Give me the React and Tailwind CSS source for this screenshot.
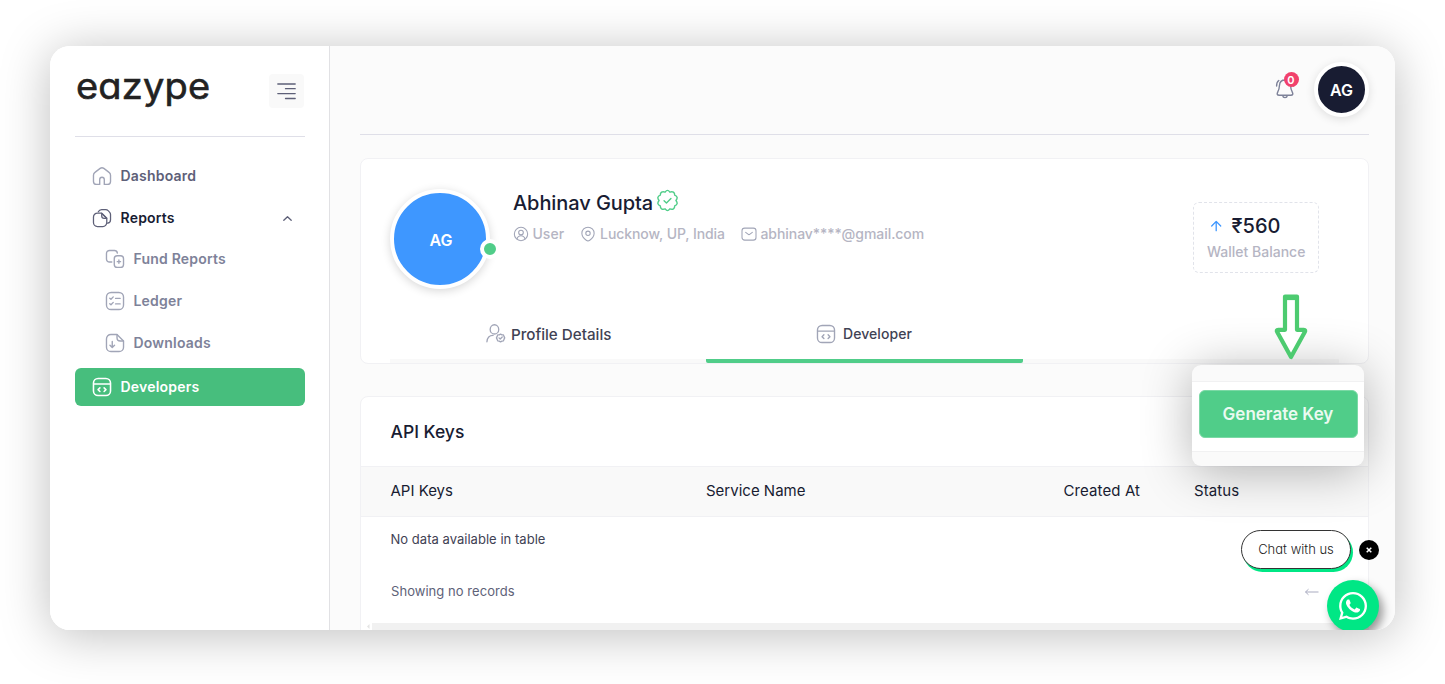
import React from "react";
import { FaWhatsapp } from "react-icons/fa";

function Svg({ size = 24, className = "", width = 1.5, children }) {
  return (
    <svg width={size} height={size} viewBox="0 0 24 24" fill="none" stroke="currentColor" strokeWidth={width} strokeLinecap="round" strokeLinejoin="round" className={`shrink-0 ${className}`}>
      {children}
    </svg>
  );
}

const HomeIcon = () => (
  <Svg size={22}>
    <path d="M9.500 21.200H6a3.300 3.300 0 0 1-3.300-3.300v-6.800c0-1.300.6-2.400 1.600-3.100L10 3.700a3.300 3.300 0 0 1 4 0L19.700 8c1 .7 1.600 1.800 1.600 3.100v6.800a3.300 3.300 0 0 1-3.300 3.300h-3.500v-5.300a2.500 2.500 0 0 0-5 0z" />
  </Svg>
);
const ReportsIcon = () => (
  <Svg size={22} width={1.400}>
    <path d="M8 5.200C8.800 3.500 10 2.800 11.600 2.800H16c1.200 0 2 .4 2.700 1.200l1.500 1.600c.8.8 1.100 1.600 1.100 2.700V14c0 2.200-1.200 3.500-3.200 3.700" />
    <path d="M7 6.700h4.500l5.700 5.600V17a4.300 4.300 0 0 1-4.300 4.300H7A4.300 4.300 0 0 1 2.700 17v-6A4.300 4.300 0 0 1 7 6.700z" />
    <path d="M11.700 6.900v2.800c0 1.700 1 2.600 2.600 2.600h2.800z" />
  </Svg>
);
const FundIcon = () => (
  <Svg size={22}>
    <path d="M8.500 15.300H6a3.300 3.300 0 0 1-3.300-3.300V6A3.300 3.300 0 0 1 6 2.700h5.400a3.300 3.300 0 0 1 3.200 2.800" />
    <rect x="11.200" y="8.500" width="10.100" height="12.700" rx="3.300" />
    <path d="M16.250 13.100v3.600M14.450 14.900h3.600" />
  </Svg>
);
const LedgerIcon = () => (
  <Svg size={22}>
    <rect x="2.700" y="2.700" width="18.600" height="18.600" rx="5" />
    <path d="M6.300 8.900l1.300 1.200 2.500-2.600M6.300 14.900l1.300 1.200 2.500-2.600M12.600 9.200h5M12.600 15.200h5" />
  </Svg>
);
const DownloadIcon = () => (
  <Svg size={22}>
    <path d="M14.200 2.700H7.500a4.800 4.800 0 0 0-4.800 4.800v9a4.800 4.800 0 0 0 4.800 4.800h9a4.800 4.800 0 0 0 4.800-4.800v-6.700z" />
    <path d="M14.200 2.900v3.400c0 2.400 1.100 3.500 3.500 3.500h3.500M9 10.300v6.500M6.500 14.500L9 17l2.500-2.500" />
  </Svg>
);
const CodeIcon = ({ width }) => (
  <Svg size={22} width={width}>
    <rect x="2.700" y="2.700" width="18.600" height="18.600" rx="5" />
    <path d="M2.900 8.800h18.200M9.700 12.900l-2 2 2 2M14.300 12.900l2 2-2 2" />
  </Svg>
);
const ProfileIcon = () => (
  <Svg size={21}>
    <ellipse cx="10.800" cy="7.300" rx="4.900" ry="5.300" />
    <path d="M2.200 21.500c.4-4.600 3-7.300 7-7.300" />
    <path d="M16.200 13.500l1.600-.8 1.600.8 1.700.1.600 1.700.8 1.700-.8 1.700-.6 1.700-1.700.3-1.600.8-1.600-.8-1.700-.3-.6-1.700-.8-1.700.8-1.700.6-1.700z" />
    <path d="M16 17l1.400 1.300 2.300-2.300" />
  </Svg>
);
const UserIcon = () => (
  <Svg size={16} width={1.600}>
    <circle cx="12" cy="12" r="10" />
    <circle cx="12" cy="9.800" r="3.500" />
    <path d="M6 19.500c.8-3 3-4.800 6-4.800s5.200 1.800 6 4.800" />
  </Svg>
);
const PinIcon = () => (
  <Svg size={16} width={1.600}>
    <path d="M12 1.800a9.200 9.200 0 0 1 9.200 9.200c0 4-3.200 8-6.600 10.400a4.500 4.500 0 0 1-5.200 0C6 19 2.800 15 2.800 11A9.200 9.200 0 0 1 12 1.800z" />
    <circle cx="12" cy="11" r="3.300" />
  </Svg>
);
const MailIcon = () => (
  <Svg size={16} width={1.600}>
    <rect x="1.500" y="3.200" width="21" height="18" rx="4" />
    <path d="M7 9.500l3.500 2.800c.9.700 2.100.7 3 0L17 9.500" />
  </Svg>
);
const BellIcon = () => (
  <Svg size={24} width={1.400}>
    <path d="M12 4c-3.300 0-5.300 2.300-5.500 5.300-.2 3.400-.6 4.700-1.700 6.500-1.200 2.200-.6 3.500 1.400 3.500h11.600c2 0 2.600-1.300 1.400-3.500-1.100-1.800-1.500-3.100-1.700-6.500C17.300 6.300 15.300 4 12 4z" />
    <path d="M9.700 19.600c.2 1.300 1.100 2 2.300 2s2.100-.7 2.300-2M5.800 4.500C4.300 5.600 3.500 7.500 3.600 10M18.200 4.500c1.500 1.100 2.300 3 2.200 5.500" />
  </Svg>
);
const VerifiedIcon = () => (
  <Svg size={25} width={1.350} className="text-[#50cd89]">
    <path d="M12 2.300Q13 2.300 14.300 4Q16.300 3.200 17.700 4Q19 5 18.900 6.800Q21 7.600 21.300 9.200Q21.300 10.600 20.100 12Q21.300 13.400 21.300 14.800Q21 16.400 18.900 17.200Q19 19 17.700 20Q16.300 20.800 14.300 20Q13 21.700 12 21.700Q11 21.700 9.700 20Q7.700 20.800 6.300 20Q5 19 5.100 17.200Q3 16.400 2.700 14.800Q2.700 13.400 3.900 12Q2.700 10.600 2.700 9.200Q3 7.600 5.100 6.800Q5 5 6.300 4Q7.700 3.200 9.700 4Q11 2.300 12 2.300z" />
    <path d="M8.700 12.200l2.300 2.200 4.300-4.400" />
  </Svg>
);

function NavItem({ icon, label, sub, dark, active, chevron }) {
  let tone = "text-[#5e6078]";
  if (dark) tone = "text-[#181c32]";
  if (sub) tone = "text-[#7e8299]";
  if (active) tone = "text-white bg-[#47be7d]";
  let iconTone = "text-[#a1a5b7]";
  if (dark) iconTone = "text-[#5e6078]";
  if (active) iconTone = "text-white";
  return (
    <a className={`flex h-[38px] items-center rounded-md ${sub ? "pl-[28.500px]" : "pl-[15.500px]"} pr-[12px] ${tone}`}>
      <span className={`-mt-px ${iconTone}`}>{icon}</span>
      <span className="-mt-[2px] ml-[8px] text-[14px] font-semibold tracking-[0.2px]">{label}</span>
      {chevron && (
        <svg width="11" height="7" viewBox="0 0 11 7" fill="none" stroke="currentColor" strokeWidth="1.300" strokeLinecap="round" strokeLinejoin="round" className="ml-auto text-[#5e6078]">
          <path d="M1.800 5.300L5.500 1.700l3.700 3.600" />
        </svg>
      )}
    </a>
  );
}

function Sidebar() {
  return (
    <aside className="h-full w-[280px] shrink-0 border-r border-[#e1e1e4] bg-white pr-[24px] pl-[25px]">
      <div className="flex h-[91px] items-start justify-between border-b border-[#dfdfe8] pr-px pt-[28px]">
        <div className="mt-[-11px] ml-px origin-left scale-x-[1.055] text-[36px] leading-[46px] font-normal tracking-[0.200px] text-[#222] [font-family:Inter,sans-serif] [font-feature-settings:'cv11'_1] [-webkit-text-stroke:0.600px_#222]">eazype</div>
        <button className="flex h-[34px] w-[35px] items-center justify-center rounded-[4px] bg-[#f9f9f9] text-[#5e6078]">
          <svg width="19" height="17" viewBox="0 0 19 17" stroke="currentColor" strokeWidth="1.300" strokeLinecap="round">
            <path d="M.8 1h17.400M8.500 5.700h9.700M.8 10.600h17.400M8.500 15.500h9.700" />
          </svg>
        </button>
      </div>
      <nav className="flex flex-col pt-[20px]">
        <NavItem icon={<HomeIcon />} label="Dashboard" />
        <div className="h-1" />
        <NavItem icon={<ReportsIcon />} label="Reports" dark chevron />
        <div className="flex flex-col gap-1 pt-[3px] pb-[6px]">
          <NavItem icon={<FundIcon />} label="Fund Reports" sub />
          <NavItem icon={<LedgerIcon />} label="Ledger" sub />
          <NavItem icon={<DownloadIcon />} label="Downloads" sub />
        </div>
        <NavItem icon={<CodeIcon width={1.700} />} label="Developers" active />
      </nav>
    </aside>
  );
}

function Header() {
  return (
    <header className="flex h-[89px] shrink-0 items-start justify-end border-b border-[#dfdfe8] pt-[16px]">
      <div className="relative mt-[14px] mr-[17.500px] text-[#7e8299]">
        <BellIcon />
        <span className="absolute top-[-4px] left-[11px] flex h-[15px] w-[15px] items-center justify-center rounded-full bg-[#f1416c] pt-px text-[11px] font-semibold text-white">0</span>
      </div>
      <div className="flex h-[55px] w-[55px] items-center justify-center rounded-full border-4 border-white bg-[#181c32] text-[16px] font-semibold text-white shadow-[0_2px_10px_rgba(0,0,0,0.12)]">AG</div>
    </header>
  );
}

function ProfileCard() {
  return (
    <section className="mt-[23px] flex h-[206px] shrink-0 flex-col rounded-lg border border-[#f1f1f4] bg-white px-[29px]">
      <div className="flex h-[149px] items-start pt-[30px]">
        <div className="relative flex h-[100px] w-[100px] shrink-0 items-center justify-center rounded-full border-4 border-white bg-[#3e97ff] pt-[2px] pl-[2px] text-[16px] font-semibold text-white shadow-[0_2px_10px_rgba(0,0,0,0.16)]">
          AG
          <span className="absolute top-[46px] left-[86px] h-5 w-5 rounded-full border-4 border-white bg-[#50cd89]" />
        </div>
        <div className="ml-[23px]">
          <div className="flex h-[28px] items-center">
            <h1 className="text-[20px] font-medium tracking-[-0.08px] text-[#181c32]">Abhinav Gupta</h1>
            <span className="mt-[-5px] ml-[2px]"><VerifiedIcon /></span>
          </div>
          <div className="mt-[6px] flex h-[20px] items-center text-[14px] font-medium text-[#b5b5c3]">
            <span className="flex items-center"><span className="mt-[2px] text-[#a1a5b7]"><UserIcon /></span><span className="ml-[3.500px]">User</span></span>
            <span className="ml-[16px] flex items-center"><span className="mt-[2px] text-[#a1a5b7]"><PinIcon /></span><span className="ml-[4px] tracking-[-0.080px]">Lucknow, UP, India</span></span>
            <span className="ml-[16px] flex items-center"><span className="mt-[2px] text-[#a1a5b7]"><MailIcon /></span><span className="ml-[3.500px] tracking-[-0.050px]">abhinav****@gmail.com</span></span>
          </div>
        </div>
        <div className="mt-[13px] mr-[20px] ml-auto h-[71px] w-[126px] rounded-md border border-dashed border-[#e1e3ea] pl-[13px]">
          <div className="flex h-[30px] items-center pt-[15px]">
            <svg width="17" height="16" viewBox="0 0 17 16" fill="none" stroke="#3e97ff" strokeWidth="1.300" strokeLinecap="round" strokeLinejoin="round">
              <path d="M9.200 12.700V3.700M4.700 8l4.500-4.600L13.700 8" />
            </svg>
            <span className="ml-[7.500px] text-[20px] leading-6 font-medium text-[#181c32]">₹560</span>
          </div>
          <div className="mt-[9px] text-[14px] leading-5 font-medium text-[#b5b5c3]">Wallet Balance</div>
        </div>
      </div>
      <div className="grid h-[55px] shrink-0 grid-cols-3 border-b-4 border-[#f9f9f9] font-medium text-[#3f4254]">
        <div className="flex h-[54px] items-center justify-center text-[15.200px]"><span className="-mt-[3px] mr-[5px] text-[#a1a5b7]"><ProfileIcon /></span><span className="mt-px">Profile Details</span></div>
        <div className="flex h-[55px] items-center justify-center rounded-[2px] border-b-4 border-[#50cd89] text-[14px]"><span className="-ml-[2px] text-[#a1a5b7]"><CodeIcon /></span><span className="ml-[6px] tracking-[0.050px]">Developer</span></div>
      </div>
    </section>
  );
}

function KeysCard() {
  return (
    <section className="mt-[32px] flex h-[260px] shrink-0 flex-col rounded-lg border border-[#f1f1f4] bg-white text-[#181c32]">
      <h2 className="flex h-[69px] items-center pl-[29.500px] pt-px text-[17.500px] font-medium">API Keys</h2>
      <div className="flex h-[51px] items-center border-y border-[#f1f1f4] bg-[#f9f9f9] pl-[29.500px] text-[15px]">
        <span className="w-[315.500px]">API Keys</span>
        <span className="w-[357.500px]">Service Name</span>
        <span className="w-[130.500px] tracking-[0.1px]">Created At</span>
        <span className="tracking-[0.1px]">Status</span>
      </div>
      <div className="flex h-[44px] items-center pt-px pl-[29.500px] text-[13px] tracking-[0.03px] text-[#3f4254]">No data available in table</div>
      <div className="flex h-[62px] items-center justify-between pr-[49px] pb-px pl-[30px] text-[13px] tracking-[0.05px] text-[#5e6278]">
        <span>Showing no records</span>
        <svg width="15" height="8" viewBox="0 0 15 8" fill="none" stroke="#a9abc0" strokeWidth="1" className="mt-px">
          <path d="M1.500 4h13M4.500 1.200L1.500 4l3 2.800" />
        </svg>
      </div>
      <div className="flex h-4 pl-[5px]">
        <svg width="6" height="8" viewBox="0 0 6 8" fill="#e4e4e4"><path d="M3.500 1v5L1 3.500z" /></svg>
        <div className="flex-1 bg-[#f1f1f1]" />
      </div>
    </section>
  );
}

export default function App() {
  return (
    <div className="h-[684px] w-[1445px] overflow-hidden bg-white px-[50px] pt-[46px] [font-family:Inter,sans-serif]">
      <div className="h-[584px] w-[1345px] rounded-[20px] shadow-[0_5px_50px_rgba(0,0,0,0.26)]">
        <div className="relative flex h-full overflow-hidden rounded-[20px] bg-[#fbfbfb]">
          <Sidebar />
          <main className="flex min-w-0 flex-1 flex-col pr-[26px] pl-[30px]">
            <Header />
            <ProfileCard />
            <KeysCard />
          </main>

          <div className="absolute top-[319px] left-[1142px] flex h-[101px] w-[172px] flex-col rounded-[9px] bg-[#fafafa] pt-[16px] shadow-[0_5px_50px_rgba(0,0,0,0.3)]">
            <div className="flex h-[71px] items-start justify-center border-y border-[#f1f1f2] bg-white pt-[8px]">
              <button className="h-[48px] w-[159px] rounded-md border border-[#7bd9a5] bg-[#50cd89] pt-[2px] text-[17px] font-semibold text-[#ebfaf1]">Generate Key</button>
            </div>
          </div>
          <svg width="34" height="68" viewBox="0 0 34 68" fill="#fff" stroke="#4dcb70" strokeWidth="4.200" strokeLinejoin="round" className="absolute top-[247px] left-[1224px]">
            <path d="M11 3.500h12v33.300h6.800q2.200 0 1 2.200L17 64 3.200 39q-1.200-2.200 1-2.200H11z" />
            <path d="M11 5h12" />
          </svg>

          <div className="absolute top-[484px] left-[1191px] flex h-[39px] w-[110px] items-center justify-center rounded-full border border-[#333] bg-white text-[13px] font-light text-[#222] shadow-[2px_3px_0_#00e785] [font-feature-settings:'cv11'_1]">Chat with us</div>
          <div className="absolute top-[494px] left-[1309px] flex h-5 w-5 items-center justify-center rounded-full bg-black">
            <svg width="6" height="6" viewBox="0 0 6 6" stroke="#fff" strokeWidth="1.500"><path d="M.7.7l4.600 4.600M5.300.7L.7 5.300" /></svg>
          </div>
          <div className="absolute top-[534px] left-[1277px] flex h-[52px] w-[52px] items-center justify-center rounded-full bg-[#00e785] text-white shadow-[4px_5px_10px_rgba(0,0,0,0.4)]">
            <FaWhatsapp size={32} />
          </div>
        </div>
      </div>
    </div>
  );
}
